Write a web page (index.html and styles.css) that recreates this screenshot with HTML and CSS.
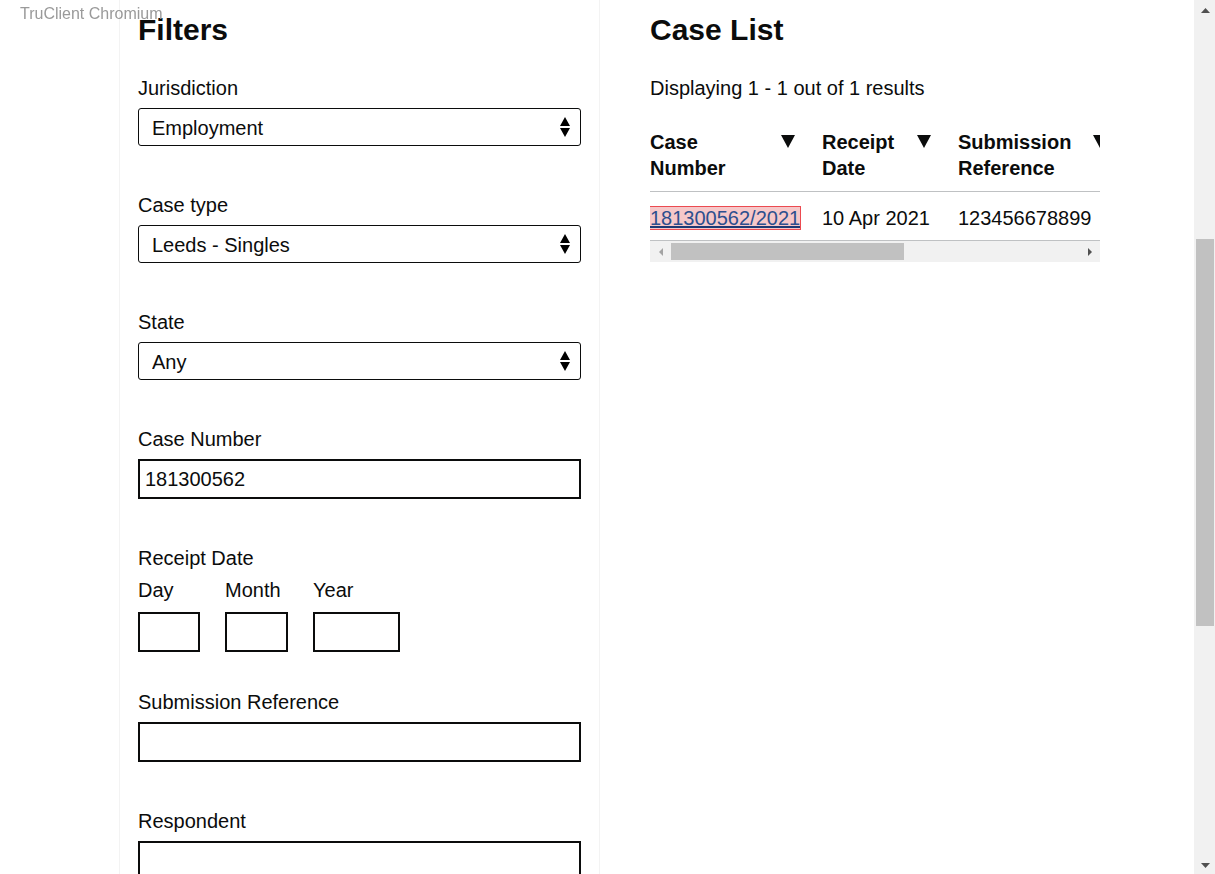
FILE: index.html
```html
<!DOCTYPE html>
<html lang="en">
<head>
<meta charset="utf-8">
<title>Case List</title>
<link rel="stylesheet" href="styles.css">
</head>
<body>
<div class="tool-label">TruClient Chromium</div>
<div class="viewport">
  <main class="page">
    <section class="filters">
      <h1 class="heading">Filters</h1>

      <div class="group">
        <label class="label" for="jur">Jurisdiction</label>
        <div class="select-wrap">
          <select id="jur" class="select"><option>Employment</option></select>
          <svg class="select-icon" width="10" height="20" viewBox="0 0 10 20"><path d="M5 0 L10 9 L0 9 Z M0 11 L10 11 L5 20 Z" fill="#000"/></svg>
        </div>
      </div>

      <div class="group">
        <label class="label" for="ct">Case type</label>
        <div class="select-wrap">
          <select id="ct" class="select"><option>Leeds - Singles</option></select>
          <svg class="select-icon" width="10" height="20" viewBox="0 0 10 20"><path d="M5 0 L10 9 L0 9 Z M0 11 L10 11 L5 20 Z" fill="#000"/></svg>
        </div>
      </div>

      <div class="group">
        <label class="label" for="st">State</label>
        <div class="select-wrap">
          <select id="st" class="select"><option>Any</option></select>
          <svg class="select-icon" width="10" height="20" viewBox="0 0 10 20"><path d="M5 0 L10 9 L0 9 Z M0 11 L10 11 L5 20 Z" fill="#000"/></svg>
        </div>
      </div>

      <div class="group group-input">
        <label class="label" for="cn">Case Number</label>
        <input id="cn" class="input" type="text" value="181300562">
      </div>

      <div class="group group-date">
        <div class="label label-date">Receipt Date</div>
        <div class="date-row">
          <div class="date-item">
            <label class="date-label" for="dd">Day</label>
            <input id="dd" class="input input-day" type="text">
          </div>
          <div class="date-item">
            <label class="date-label" for="mm">Month</label>
            <input id="mm" class="input input-month" type="text">
          </div>
          <div class="date-item">
            <label class="date-label" for="yy">Year</label>
            <input id="yy" class="input input-year" type="text">
          </div>
        </div>
      </div>

      <div class="group group-input">
        <label class="label" for="sr">Submission Reference</label>
        <input id="sr" class="input" type="text">
      </div>

      <div class="group group-input">
        <label class="label" for="rs">Respondent</label>
        <input id="rs" class="input" type="text">
      </div>
    </section>

    <section class="results">
      <h1 class="heading">Case List</h1>
      <p class="summary">Displaying 1 - 1 out of 1 results</p>
      <div class="table-wrap">
        <div class="table-clip">
          <table class="table">
            <thead>
              <tr>
                <th class="col-num"><div class="th-inner"><span class="th-text">Case Number</span><svg class="sort" width="14" height="13" viewBox="0 0 14 13"><path d="M0 0 H14 L7 13 Z" fill="#0b0c0c"/></svg></div></th>
                <th class="col-date"><div class="th-inner"><span class="th-text">Receipt Date</span><svg class="sort" width="14" height="13" viewBox="0 0 14 13"><path d="M0 0 H14 L7 13 Z" fill="#0b0c0c"/></svg></div></th>
                <th class="col-sub"><div class="th-inner"><span class="th-text">Submission Reference</span><svg class="sort" width="14" height="13" viewBox="0 0 14 13"><path d="M0 0 H14 L7 13 Z" fill="#0b0c0c"/></svg></div></th>
                <th class="col-cl"><div class="th-inner"><span class="th-text">Claimant</span><svg class="sort" width="14" height="13" viewBox="0 0 14 13"><path d="M0 0 H14 L7 13 Z" fill="#0b0c0c"/></svg></div></th>
                <th class="col-rs"><div class="th-inner"><span class="th-text">Respondent</span><svg class="sort" width="14" height="13" viewBox="0 0 14 13"><path d="M0 0 H14 L7 13 Z" fill="#0b0c0c"/></svg></div></th>
              </tr>
            </thead>
            <tbody>
              <tr>
                <td><a class="case-link" href="#">181300562/2021</a></td>
                <td>10 Apr 2021</td>
                <td>123456678899</td>
                <td>Mr Smith</td>
                <td>Acme Ltd</td>
              </tr>
            </tbody>
          </table>
        </div>
        <div class="hscroll">
          <span class="hs-btn"><svg width="4" height="8" viewBox="0 0 4 8"><path d="M4 0 V8 L0 4 Z" fill="#a3a3a3"/></svg></span>
          <div class="hs-track"><div class="hs-thumb"></div></div>
          <span class="hs-btn"><svg width="4" height="8" viewBox="0 0 4 8"><path d="M0 0 V8 L4 4 Z" fill="#505050"/></svg></span>
        </div>
      </div>
    </section>
  </main>

  <div class="vscroll">
    <span class="vs-btn vs-up"><svg width="9" height="5" viewBox="0 0 9 5"><path d="M0 5 H9 L4.5 0 Z" fill="#505050"/></svg></span>
    <div class="vs-track"><div class="vs-thumb"></div></div>
    <span class="vs-btn vs-down"><svg width="9" height="5" viewBox="0 0 9 5"><path d="M0 0 H9 L4.5 5 Z" fill="#505050"/></svg></span>
  </div>
</div>
</body>
</html>
```

FILE: styles.css
```css
* { box-sizing: border-box; }

html, body {
  margin: 0;
  padding: 0;
  height: 874px;
  overflow: hidden;
  background: #fff;
}

body {
  font-family: "Liberation Sans", Arial, sans-serif;
  font-size: 20px;
  line-height: 26px;
  color: #0b0c0c;
}

.tool-label {
  position: fixed;
  top: 5px;
  left: 20px;
  font-size: 16px;
  line-height: 18px;
  color: #9a9a9a;
  z-index: 10;
  pointer-events: none;
}

.viewport {
  display: flex;
  height: 874px;
  overflow: hidden;
}

.page {
  flex: 1;
  display: flex;
  padding-left: 119px;
}

.filters {
  width: 480px;
  border-left: 1px solid #f3f3f3;
  padding: 12px 18px 0 18px;
}

.results {
  width: 501px;
  border-left: 1px solid #f3f3f3;
  padding: 12px 0 0 50px;
}

.heading {
  margin: 0 0 27px 0;
  font-size: 30px;
  line-height: 36px;
  font-weight: 700;
}

.group {
  margin-bottom: 46px;
}

.group-input {
  margin-bottom: 46px;
}

.group-date {
  margin-bottom: 37px;
}

.label {
  display: block;
  margin-bottom: 7px;
}

.label-date {
  margin-bottom: 6px;
}

.select-wrap {
  position: relative;
  width: 443px;
}

.select {
  display: block;
  width: 443px;
  height: 38px;
  margin: 0;
  padding: 1px 30px 0 13px;
  border: 1px solid #0b0c0c;
  border-radius: 3px;
  background: #fff;
  font-family: inherit;
  font-size: 20px;
  color: #0b0c0c;
  -webkit-appearance: none;
  appearance: none;
}

.select-icon {
  position: absolute;
  right: 11px;
  top: 9px;
}

.input {
  display: block;
  width: 443px;
  height: 40px;
  margin: 0;
  padding: 0 5px;
  border: 2px solid #0b0c0c;
  border-radius: 0;
  font-family: inherit;
  font-size: 20px;
  color: #0b0c0c;
  background: #fff;
}

.date-row {
  display: flex;
  gap: 25px;
}

.date-label {
  display: block;
  margin-bottom: 9px;
}

.input-day { width: 62px; }
.input-month { width: 63px; }
.input-year { width: 87px; }

.summary {
  margin: 0 0 18px 0;
}

.table-wrap {
  width: 450px;
}

.table-clip {
  width: 450px;
  overflow: hidden;
}

.table {
  border-collapse: collapse;
  table-layout: fixed;
  width: 811px;
}

.table th,
.table td {
  text-align: left;
  vertical-align: top;
  padding: 10px 20px 10px 0;
  border-bottom: 1px solid #bfc1c3;
}

.table th {
  font-weight: 700;
}

.table td {
  padding-top: 13px;
  padding-bottom: 9px;
  white-space: nowrap;
}

.th-inner {
  display: flex;
  justify-content: space-between;
  align-items: flex-start;
}

.th-text {
  width: min-content;
}

.col-num { width: 172px; }
.col-date { width: 136px; }
.col-sub { width: 176px; }
.col-cl { width: 154px; }
.col-rs { width: 173px; }

.sort {
  flex: 0 0 14px;
  margin: 6px 7px 0 0;
}

.case-link {
  color: #2d4f8e;
  text-decoration: underline;
  text-decoration-color: #1d3a74;
  background: #f5c8c9;
  outline: 1px solid #ec4a50;
}

.hscroll {
  display: flex;
  height: 21px;
  background: #f1f1f1;
}

.hs-btn {
  width: 21px;
  display: flex;
  align-items: center;
  justify-content: center;
}

.hs-track {
  flex: 1;
  padding: 2px 0;
}

.hs-thumb {
  width: 233px;
  height: 17px;
  background: #c1c1c1;
}

.vscroll {
  width: 21px;
  flex: 0 0 21px;
  display: flex;
  flex-direction: column;
  background: #f1f1f1;
}

.vs-btn {
  height: 17px;
  display: flex;
  align-items: center;
  justify-content: center;
  padding-left: 1px;
}

.vs-up { padding-top: 3px; }
.vs-down { padding-bottom: 1px; }

.vs-track {
  flex: 1;
  padding-top: 222px;
}

.vs-thumb {
  margin: 0 1px 0 2px;
  height: 387px;
  background: #c1c1c1;
}
```
